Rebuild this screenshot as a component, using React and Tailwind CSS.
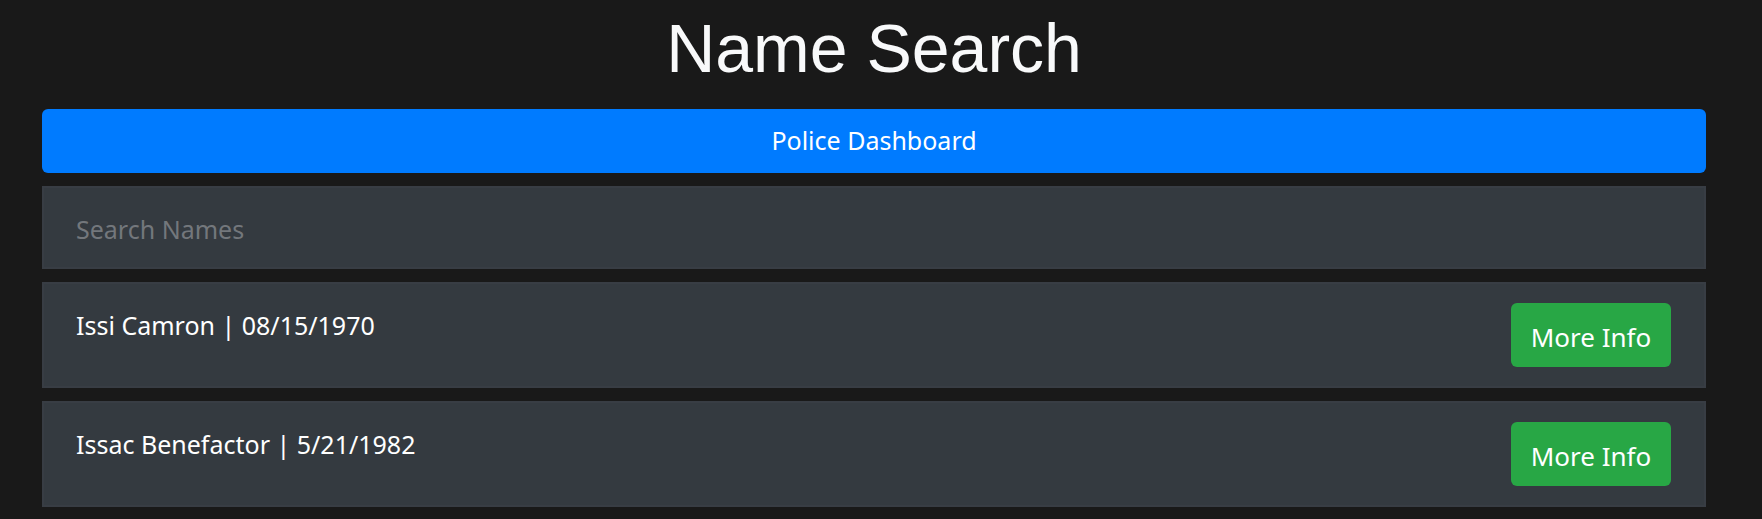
export default function App() {
  const people = [
    { name: "Issi Camron", dob: "08/15/1970" },
    { name: "Issac Benefactor", dob: "5/21/1982" },
  ];

  return (
    <div className="min-h-screen bg-[#191919] pl-[42px] pr-[56px] pt-[9px] font-['Noto_Sans',sans-serif]">
      <h1 className="text-center text-[68px] leading-[78px] text-[#f8f9fa] font-['Liberation_Sans',Arial,sans-serif]">
        Name Search
      </h1>

      <div className="mt-[22px] flex h-[64px] items-center justify-center rounded-[6px] bg-[#007bff] text-[25px] text-white">
        Police Dashboard
      </div>

      <div className="mt-[13px] flex h-[83px] items-center border-2 border-[#383d44] bg-[#343a40] pl-[32px] pt-[4px]">
        <input
          type="text"
          placeholder="Search Names"
          className="w-full bg-transparent text-[25px] text-white placeholder-[#73777c] outline-none"
        />
      </div>

      {people.map((p) => (
        <div
          key={p.name}
          className="mt-[13px] flex h-[106px] items-center justify-between border-2 border-[#383d44] bg-[#343a40] pl-[32px] pr-[33px]"
        >
          <span className="self-start pt-[23px] text-[25px] text-white">
            {p.name} | {p.dob}
          </span>
          <button className="flex h-[64px] w-[160px] items-center justify-center rounded-[6px] bg-[#28a745] pt-[4px] text-[26px] text-white">
            More Info
          </button>
        </div>
      ))}
    </div>
  );
}
